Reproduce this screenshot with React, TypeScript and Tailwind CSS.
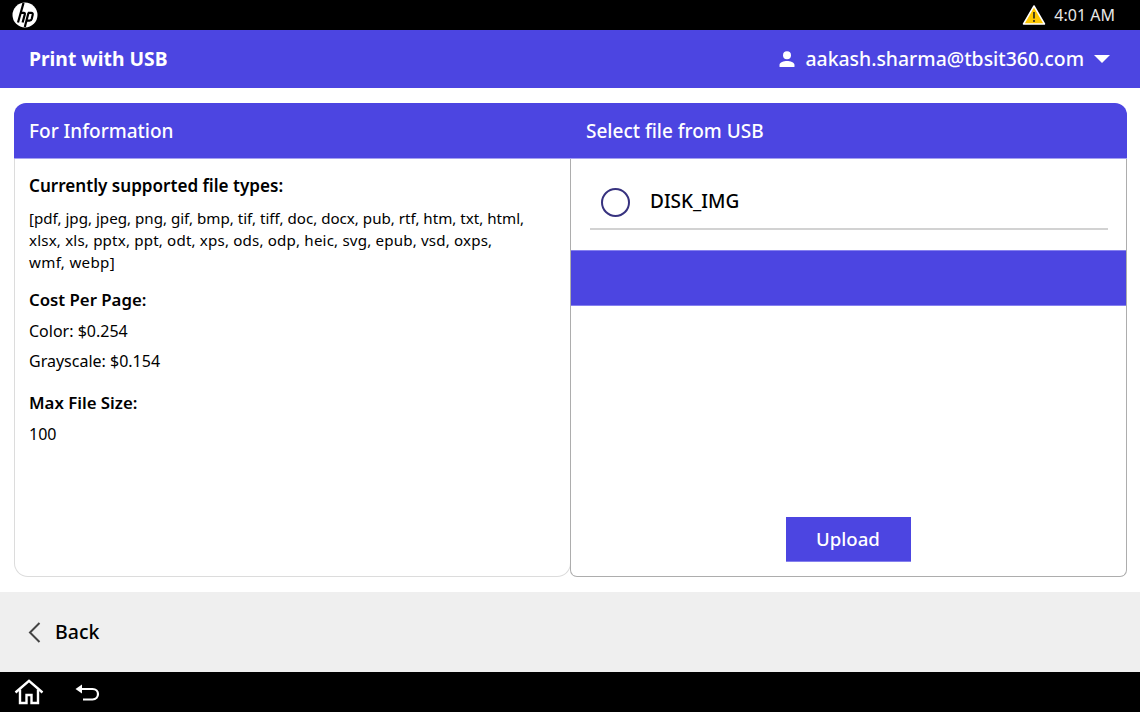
const font = "font-['Noto_Sans','Open_Sans',sans-serif]"

function HpLogo() {
  return (
    <svg viewBox="0 0 26 26" className="h-[26px] w-[26px]">
      <circle cx="13" cy="13" r="12.500" fill="#fff" />
      <g fill="none" stroke="#000" strokeWidth="2.200">
        <path d="M11.500 1 6 20.500" />
        <path d="M8 10.800h3.800c1 0 1.300.6 1 1.600L10.600 20.500" />
        <path d="M16 10.800h3.200c1.300 0 1.800.8 1.500 2l-1 4.200c-.3 1.100-1 1.600-2.100 1.600h-2.600" />
        <path d="M16.500 10.800 12.800 25" />
      </g>
    </svg>
  )
}

function WarningIcon() {
  return (
    <svg viewBox="0 0 24 22" className="h-[22px] w-[24px]">
      <path d="M12 2 22.500 20H1.500Z" fill="#ffc800" stroke="#fff" strokeWidth="1.500" strokeLinejoin="round" />
      <path d="M12 8v6.500" stroke="#222" strokeWidth="1.600" />
      <circle cx="12" cy="17" r="1" fill="#222" />
    </svg>
  )
}

function UserIcon() {
  return (
    <svg viewBox="0 0 18 18" className="h-[18px] w-[18px]" fill="#fff">
      <circle cx="9" cy="5.200" r="4" />
      <path d="M1.500 16.500v-1.600c0-2.600 4.400-4 7.500-4s7.500 1.400 7.500 4v1.600c0 .4-.3.6-.6.6H2.100c-.3 0-.6-.2-.6-.6Z" />
    </svg>
  )
}

function HomeIcon() {
  return (
    <svg viewBox="0 0 30 26" className="h-[26px] w-[30px]" fill="none" stroke="#fff" strokeWidth="2.400">
      <path d="M1.500 13.500 15 1.800l13.500 11.700" />
      <path d="M6 10.500V24h6.500v-8h5v8H24V10.500" />
    </svg>
  )
}

function ReturnIcon() {
  return (
    <svg viewBox="0 0 26 22" className="h-[22px] w-[26px]" fill="none" stroke="#fff" strokeWidth="2.200">
      <path d="M6 8h12.500c3.500 0 5.500 2.200 5.500 5s-2 5.500-5.500 5.500H9" />
      <path d="M1.500 8 8 3.500v9Z" fill="#fff" stroke="none" />
    </svg>
  )
}

export default function App() {
  return (
    <div className={`flex h-[712px] w-[1140px] flex-col overflow-hidden bg-white text-black ${font}`}>
      {/* status bar */}
      <div className="flex h-[30px] items-center justify-between bg-black pl-3 pr-[25px]">
        <HpLogo />
        <div className="flex items-center gap-[8px]">
          <WarningIcon />
          <span className="text-[16px] text-[#e8e8e8]">4:01 AM</span>
        </div>
      </div>

      {/* title bar */}
      <div className="flex h-[58px] items-center justify-between bg-[#4c45e1] pl-[29px] pr-[30px] text-white">
        <div className="text-[19.300px] font-bold">Print with USB</div>
        <div className="flex items-center">
          <UserIcon />
          <span className="ml-[9px] text-[19.400px] font-medium">aakash.sharma@tbsit360.com</span>
          <span className="ml-[10px] h-0 w-0 border-x-[8px] border-t-[8px] border-x-transparent border-t-white" />
        </div>
      </div>

      {/* main */}
      <div className="flex h-[504px] flex-col pb-[15px] pl-[14px] pr-[13px] pt-[15px]">
        <div className="grid h-[56px] grid-cols-[557px_1fr] rounded-t-[12px] border-b border-[#a5a1f0] bg-[#4c45e1] pt-[2px] text-[19px] font-medium text-white">
          <div className="flex items-center pl-[15px]">For Information</div>
          <div className="flex items-center pl-[15px]">Select file from USB</div>
        </div>
        <div className="grid flex-1 grid-cols-[557px_1fr]">
          <div className="rounded-b-[14px] border-x border-b border-[#dcdcdc] pl-[14px] pt-[14px]">
            <div className="text-[17.100px] font-semibold">Currently supported file types:</div>
            <p className="mt-[8px] text-[15.130px] leading-[22px]">
              [pdf, jpg, jpeg, png, gif, bmp, tif, tiff, doc, docx, pub, rtf, htm, txt, html,<br />
              <span className="tracking-[0.17px]">xlsx, xls, pptx, ppt, odt, xps, ods, odp, heic, svg, epub, vsd, oxps,</span><br />
              <span className="tracking-[0.3px]">wmf, webp]</span>
            </p>
            <div className="mt-[14px] text-[16.800px] font-semibold">Cost Per Page:</div>
            <div className="mt-[8px] text-[16px] leading-[22px]">Color: $0.254</div>
            <div className="mt-[8px] text-[16px] leading-[22px]">Grayscale: $0.154</div>
            <div className="mt-[18px] text-[16.800px] font-semibold">Max File Size:</div>
            <div className="mt-[8px] text-[16px] leading-[22px]">100</div>
          </div>
          <div className="-ml-[1px] flex flex-col rounded-b-[7px] border-x border-b border-[#adadad]">
            <div className="ml-[19px] mr-[18px] flex h-[71px] items-center gap-[20px] border-b-2 border-[#d2d2d2] pl-[11px] pt-[18px]">
              <span className="h-[29px] w-[29px] rounded-full border-2 border-[#37327f]" />
              <span className="-mt-[2px] text-[19px] font-medium">DISK_IMG</span>
            </div>
            <div className="mt-[20px] h-[56px] border-y border-[#8580ee] bg-[#4c45e1]" />
            <div className="flex flex-1 items-end justify-center pb-[14px] pr-[1px]">
              <button className="h-[45px] w-[125px] border-b border-[#8580ee] bg-[#4c45e1] text-[18.600px] font-medium text-white">
                Upload
              </button>
            </div>
          </div>
        </div>
      </div>

      {/* back bar */}
      <div className="flex h-[80px] items-center bg-[#efefef] pl-[28px]">
        <svg viewBox="0 0 13 21" className="h-[21px] w-[13px]" fill="none" stroke="#444" strokeWidth="2">
          <path d="M11.500 1 2 10.500 11.500 20" />
        </svg>
        <span className="ml-[14px] text-[19.500px] font-medium">Back</span>
      </div>

      {/* nav bar */}
      <div className="flex h-[40px] items-center bg-black pl-[14px]">
        <HomeIcon />
        <span className="ml-[30px]"><ReturnIcon /></span>
      </div>
    </div>
  )
}
